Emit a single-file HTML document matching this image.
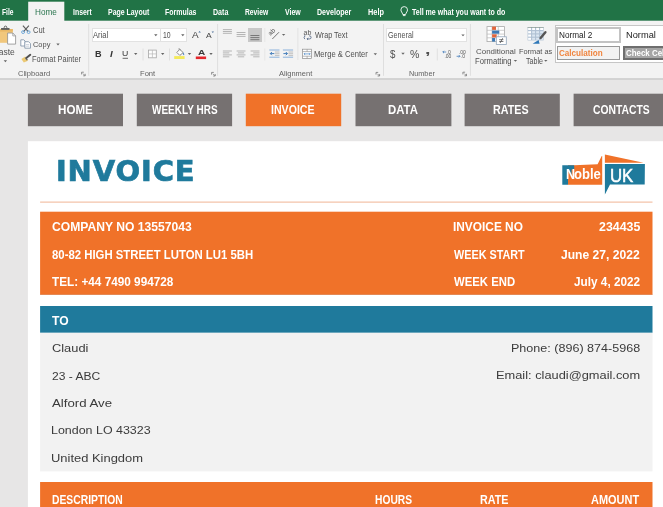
<!DOCTYPE html>
<html lang="en">
<head>
<meta charset="utf-8">
<title>Invoice</title>
<style>
html,body{margin:0;padding:0;}
body{width:663px;height:507px;overflow:hidden;position:relative;background:#e7e6e6;font-family:"Liberation Sans",sans-serif;}
.a{position:absolute;}
.t{position:absolute;white-space:nowrap;line-height:20px;height:20px;transform-origin:0 50%;}
.box{position:absolute;background:#fff;border:1px solid #e2e2e2;box-sizing:border-box;}
#txt{position:absolute;left:0;top:0;width:663px;height:507px;will-change:transform;filter:blur(0.4px);}
#title{left:55.9px;top:157px;font:bold 29px/1 "DejaVu Sans",sans-serif;color:#1f7a9c;-webkit-text-stroke:0.7px #1f7a9c;letter-spacing:0.86px;white-space:nowrap;}
</style>
</head>
<body>
<svg class="a" style="left:0;top:0" width="663" height="82" viewBox="0 0 663 82">
<rect x="0" y="0" width="663" height="79" fill="#f3f3f3"/>
<rect x="0" y="0" width="663" height="20.7" fill="#217346"/>
<rect x="28.2" y="1.7" width="36.1" height="21" fill="#f3f3f3"/>
<rect x="0" y="78.4" width="663" height="1.1" fill="#c0c0c0"/>
</svg>
<!-- combo boxes -->
<div class="box" style="left:91.8px;top:28.2px;width:69px;height:14px"></div>
<div class="box" style="left:159.8px;top:28.2px;width:27.4px;height:14px"></div>
<div class="box" style="left:385.8px;top:28.2px;width:81px;height:14px"></div>
<!-- selected align button -->
<div class="a" style="left:248.3px;top:27.7px;width:13.8px;height:14.2px;background:#c8c8c8"></div>
<!-- styles gallery -->
<div class="box" style="left:555.2px;top:25.2px;width:120px;height:37.6px;border-color:#c6c6c6"></div>
<div class="box" style="left:556px;top:27px;width:65px;height:16px;border:2px solid #c3c3c3"></div>
<div class="box" style="left:557px;top:46px;width:63px;height:14px;background:#f2f2f2;border-color:#989898"></div>
<div class="box" style="left:623px;top:46px;width:50px;height:14px;background:#a5a5a5;border:2px solid #6e6e6e"></div>
<svg class="a" style="left:0;top:0;will-change:transform;filter:blur(0.3px)" width="663" height="80" viewBox="0 0 663 80" fill="none">
<path d="M88.7,24 V75.8" stroke="#dedede" stroke-width="1"/>
<path d="M217.6,24 V75.8" stroke="#dedede" stroke-width="1"/>
<path d="M383.5,24 V75.8" stroke="#dedede" stroke-width="1"/>
<path d="M470.4,24 V75.8" stroke="#dedede" stroke-width="1"/>
<path d="M297.9,28 V60" stroke="#e3e3e3" stroke-width="1"/>
<path d="M143,48.5 V60.5" stroke="#e0e0e0" stroke-width="1"/>
<path d="M169.5,48.5 V60.5" stroke="#e0e0e0" stroke-width="1"/>
<path d="M437.3,48.5 V60.5" stroke="#e0e0e0" stroke-width="1"/>
<path d="M264.8,28 V42" stroke="#e6e6e6" stroke-width="1"/>
<path d="M264.8,48.5 V60.5" stroke="#e6e6e6" stroke-width="1"/>
<path d="M404.2,6.6 a3.3,3.3 0 0 1 3.3,3.3 c0,1.6 -1.3,2.4 -1.9,4.6 h-2.8 c-0.6,-2.2 -1.9,-3 -1.9,-4.6 a3.3,3.3 0 0 1 3.3,-3.3 z" stroke="#e8f2ec" stroke-width="1" fill="none"/>
<path d="M402.9,15.6 h2.6" stroke="#e8f2ec" stroke-width="1"/>
<rect x="-2" y="29" width="14.8" height="13.8" fill="#f1c77c"/>
<rect x="-2" y="29" width="14.8" height="2.6" fill="#e9b866"/>
<rect x="1.1" y="28" width="8.4" height="1.9" fill="#5f5f5f"/>
<path d="M4.2,28 v-0.6 a1.3,1.3 0 0 1 2.6,0 v0.6" stroke="#5f5f5f" stroke-width="1" fill="none"/>
<path d="M7.6,33 h5.2 l2.8,2.9 v8.2 h-8 z" fill="#fff" stroke="#8e8e8e" stroke-width="0.8"/>
<path d="M12.8,33 v2.9 h2.8" fill="none" stroke="#8e8e8e" stroke-width="0.7"/>
<polygon points="3.70,60.25 7.10,60.25 5.40,62.15" fill="#666"/>
<path d="M22.9,25.6 L28.2,31.6 M28.9,25.6 L23.6,31.6" stroke="#5a5a5a" stroke-width="1.1" fill="none"/>
<ellipse cx="23.1" cy="32.1" rx="1.5" ry="1.4" stroke="#5f9fd6" stroke-width="0.85" fill="none"/>
<ellipse cx="28.6" cy="32.1" rx="1.5" ry="1.4" stroke="#5f9fd6" stroke-width="0.85" fill="none"/>
<path d="M20.8,39.8 h3 l1.4,1.4 v4.8 h-4.4 z" fill="#fff" stroke="#7b8ea3" stroke-width="0.8"/>
<path d="M24.8,41.7 h3.8 l1.9,1.9 v4.6 h-5.7 z" fill="#fff" stroke="#7b8ea3" stroke-width="0.8"/>
<path d="M26,44.6 h3.2 M26,46.2 h3.2" stroke="#a9b6c4" stroke-width="0.6"/>
<polygon points="56.30,43.55 59.70,43.55 58.00,45.45" fill="#666"/>
<polygon points="21.4,58.9 25.2,56.4 28,60.7 23.8,62.6" fill="#ecc973"/>
<path d="M25.4,57.6 L27.3,60.2" stroke="#6a6a6a" stroke-width="1.4"/>
<path d="M26.6,57.8 L30.3,54.8" stroke="#4f4f4f" stroke-width="1.9" stroke-linecap="round"/>
<polygon points="154.10,34.35 157.50,34.35 155.80,36.25" fill="#666"/>
<polygon points="181.10,34.35 184.50,34.35 182.80,36.25" fill="#666"/>
<polygon points="134.00,53.05 137.40,53.05 135.70,54.95" fill="#666"/>
<polygon points="161.00,53.05 164.40,53.05 162.70,54.95" fill="#666"/>
<polygon points="187.80,53.05 191.20,53.05 189.50,54.95" fill="#666"/>
<polygon points="209.30,53.05 212.70,53.05 211.00,54.95" fill="#666"/>
<polygon points="281.90,33.95 285.30,33.95 283.60,35.85" fill="#666"/>
<polygon points="373.60,53.35 377.00,53.35 375.30,55.25" fill="#666"/>
<polygon points="461.30,34.45 464.70,34.45 463.00,36.35" fill="#666"/>
<polygon points="401.30,52.85 404.70,52.85 403.00,54.75" fill="#666"/>
<polygon points="513.70,59.95 517.10,59.95 515.40,61.85" fill="#666"/>
<polygon points="544.10,59.95 547.50,59.95 545.80,61.85" fill="#666"/>
<polygon points="198.3,32.6 199.6,30.9 200.9,32.6" fill="#4c6f99"/>
<polygon points="211.6,31.4 214,31.4 212.8,33" fill="#4c6f99"/>
<path d="M122.6,58.3 H128" stroke="#444" stroke-width="0.8"/>
<rect x="148.5" y="50.1" width="7.8" height="7.7" fill="#fdfdfd" stroke="#a6a6a6" stroke-width="0.8"/>
<path d="M152.4,50.1 v7.7 M148.5,53.9 h7.8" stroke="#b8b8b8" stroke-width="0.7"/>
<path d="M176.8,52.4 L179.8,49.4 L183.2,52.6 L179.8,55.4 Z" fill="#fff" stroke="#707070" stroke-width="0.8"/>
<path d="M178.3,49 q1.6,-1 2,1.2" fill="none" stroke="#7a7a7a" stroke-width="0.7"/>
<path d="M183.2,52.2 q1.6,1.8 0.9,3 q-1.6,0 -0.9,-3z" fill="#4f86c0"/>
<rect x="174.2" y="56.1" width="10.4" height="2.9" fill="#f4ea5a"/>
<rect x="195.8" y="56.5" width="10.3" height="2.6" fill="#e3262c"/>
<path d="M222.9,29.6 H231.9" stroke="#a4a4a4" stroke-width="0.8"/>
<path d="M222.9,31.5 H231.9" stroke="#a4a4a4" stroke-width="0.8"/>
<path d="M222.9,33.3 H231.9" stroke="#a4a4a4" stroke-width="0.8"/>
<path d="M236.6,32.5 H245.5" stroke="#a4a4a4" stroke-width="0.8"/>
<path d="M236.6,34.5 H245.5" stroke="#a4a4a4" stroke-width="0.8"/>
<path d="M236.6,36.4 H245.5" stroke="#a4a4a4" stroke-width="0.8"/>
<path d="M250.4,35.5 H259.4" stroke="#6e6e6e" stroke-width="0.9"/>
<path d="M250.4,37.6 H259.4" stroke="#6e6e6e" stroke-width="0.9"/>
<path d="M250.4,39.7 H259.4" stroke="#6e6e6e" stroke-width="0.9"/>
<path d="M222.9,51 H231.9" stroke="#a4a4a4" stroke-width="0.8"/>
<path d="M236.6,51 H245.5" stroke="#a4a4a4" stroke-width="0.8"/>
<path d="M250.6,51 H259.5" stroke="#a4a4a4" stroke-width="0.8"/>
<path d="M222.9,52.9 H229.3" stroke="#a4a4a4" stroke-width="0.8"/>
<path d="M237.9,52.9 H244.2" stroke="#a4a4a4" stroke-width="0.8"/>
<path d="M253.2,52.9 H259.5" stroke="#a4a4a4" stroke-width="0.8"/>
<path d="M222.9,54.9 H231.9" stroke="#a4a4a4" stroke-width="0.8"/>
<path d="M236.6,54.9 H245.5" stroke="#a4a4a4" stroke-width="0.8"/>
<path d="M250.6,54.9 H259.5" stroke="#a4a4a4" stroke-width="0.8"/>
<path d="M222.9,56.8 H229.3" stroke="#a4a4a4" stroke-width="0.8"/>
<path d="M237.9,56.8 H244.2" stroke="#a4a4a4" stroke-width="0.8"/>
<path d="M253.2,56.8 H259.5" stroke="#a4a4a4" stroke-width="0.8"/>
<text x="0" y="0" transform="translate(270.6,36) rotate(-45)" font-family="Liberation Sans, sans-serif" font-size="6.6" fill="#555">ab</text>
<path d="M272.3,39 L279,32.2" stroke="#666" stroke-width="0.9"/>
<path d="M269.3,50 H279.5" stroke="#6f9fd3" stroke-width="0.8"/>
<path d="M269.3,57.2 H279.5" stroke="#6f9fd3" stroke-width="0.8"/>
<path d="M274.90000000000003,52 H279.5" stroke="#aaaaaa" stroke-width="0.7"/>
<path d="M274.90000000000003,53.7 H279.5" stroke="#aaaaaa" stroke-width="0.7"/>
<path d="M274.90000000000003,55.4 H279.5" stroke="#aaaaaa" stroke-width="0.7"/>
<path d="M282.9,50 H293.09999999999997" stroke="#6f9fd3" stroke-width="0.8"/>
<path d="M282.9,57.2 H293.09999999999997" stroke="#6f9fd3" stroke-width="0.8"/>
<path d="M288.5,52 H293.09999999999997" stroke="#aaaaaa" stroke-width="0.7"/>
<path d="M288.5,53.7 H293.09999999999997" stroke="#aaaaaa" stroke-width="0.7"/>
<path d="M288.5,55.4 H293.09999999999997" stroke="#aaaaaa" stroke-width="0.7"/>
<path d="M274.3,53.6 h-4 m1.6,-1.6 l-1.6,1.6 l1.6,1.6" stroke="#2f6fb3" stroke-width="0.9" fill="none"/>
<path d="M283.4,53.6 h4 m-1.6,-1.6 l1.6,1.6 l-1.6,1.6" stroke="#2f6fb3" stroke-width="0.9" fill="none"/>
<text x="303.6" y="34.6" font-family="Liberation Sans, sans-serif" font-size="7" fill="#555">ab</text>
<path d="M304.2,35.9 h1.2 M309,35.9 h0.6 a1.5,1.5 0 0 1 0,3 h-2.6 m1.1,-1.1 l-1.1,1.1 l1.1,1.1" stroke="#4b5f80" stroke-width="0.8" fill="none"/><path d="M304.6,36.2 q-1.2,1.4 0.2,2.9" stroke="#4b5f80" stroke-width="0.8" fill="none"/>

<rect x="302.6" y="49.2" width="9" height="9.4" fill="#fff" stroke="#8e8e8e" stroke-width="0.7"/>
<path d="M302.6,51.6 h9 M302.6,56.2 h9 M307.1,49.2 v2.4 M307.1,56.2 v2.4" stroke="#9a9a9a" stroke-width="0.7"/>
<path d="M304,53.9 h6.2 m-5.2,-1 l-1,1 l1,1 m4.2,-2 l1,1 l-1,1" stroke="#4a86c5" stroke-width="0.7" fill="none"/>
<text x="446.6" y="53.7" font-family="Liberation Sans, sans-serif" font-size="5" fill="#555">.0</text><text x="444.4" y="57.9" font-family="Liberation Sans, sans-serif" font-size="5" fill="#555">.00</text>
<path d="M446.2,52 h-3.4 m1.2,-1.2 l-1.2,1.2 l1.2,1.2" stroke="#2f6fb3" stroke-width="0.7" fill="none"/>
<text x="458.8" y="53.7" font-family="Liberation Sans, sans-serif" font-size="5" fill="#555">.00</text><text x="460.9" y="57.9" font-family="Liberation Sans, sans-serif" font-size="5" fill="#555">.0</text>
<path d="M456.6,56.3 h3.4 m-1.2,-1.2 l1.2,1.2 l-1.2,1.2" stroke="#2f6fb3" stroke-width="0.7" fill="none"/>
<path d="M81.6,72.60000000000001 H81.69999999999999 M81.6,72.2 h2.2 M81.6,72.2 v2.2" stroke="#777" stroke-width="0.8" fill="none"/><path d="M83.0,73.60000000000001 L85.0,75.60000000000001 M85.19999999999999,73.8 V75.8 H83.19999999999999" stroke="#777" stroke-width="0.8" fill="none"/>
<path d="M211.6,72.80000000000001 H211.7 M211.6,72.4 h2.2 M211.6,72.4 v2.2" stroke="#777" stroke-width="0.8" fill="none"/><path d="M213.0,73.80000000000001 L215.0,75.80000000000001 M215.2,74.0 V76.0 H213.2" stroke="#777" stroke-width="0.8" fill="none"/>
<path d="M376,72.80000000000001 H376.1 M376,72.4 h2.2 M376,72.4 v2.2" stroke="#777" stroke-width="0.8" fill="none"/><path d="M377.4,73.80000000000001 L379.4,75.80000000000001 M379.6,74.0 V76.0 H377.6" stroke="#777" stroke-width="0.8" fill="none"/>
<path d="M462.9,72.60000000000001 H463.0 M462.9,72.2 h2.2 M462.9,72.2 v2.2" stroke="#777" stroke-width="0.8" fill="none"/><path d="M464.29999999999995,73.60000000000001 L466.29999999999995,75.60000000000001 M466.5,73.8 V75.8 H464.5" stroke="#777" stroke-width="0.8" fill="none"/>
<rect x="487" y="26.6" width="17.4" height="15" fill="#fff" stroke="#a9a9a9" stroke-width="0.8"/>
<path d="M487,30.3 h17.4 M487,34.1 h17.4 M487,37.8 h17.4 M492.1,26.6 v15 M498.3,26.6 v15" stroke="#b9b9b9" stroke-width="0.7"/>
<rect x="492.1" y="26.6" width="3.9" height="3.3" fill="#e2653c"/>
<rect x="492.1" y="30.6" width="7.2" height="3.1" fill="#3d79b4"/>
<rect x="492.1" y="34.3" width="4.6" height="3.2" fill="#e2653c"/>
<rect x="492.1" y="38" width="3" height="3.6" fill="#3d79b4"/>
<rect x="496.3" y="36.8" width="10" height="7.6" fill="#fff" stroke="#8fa3b8" stroke-width="0.8"/>
<path d="M499.2,39.7 h4.2 M499.2,41.5 h4.2 M502.7,38.2 l-2.6,4.8" stroke="#444" stroke-width="0.7"/>
<rect x="527.6" y="27.3" width="16.0" height="13.1" fill="#afc0d3"/>
<rect x="527.6" y="27.0" width="16.0" height="0.9" fill="#8f9d98"/>
<rect x="528.15" y="27.85" width="2.90" height="2.20" fill="#ffffff"/>
<rect x="532.15" y="27.85" width="2.90" height="2.20" fill="#ffffff"/>
<rect x="536.15" y="27.85" width="2.90" height="2.20" fill="#ffffff"/>
<rect x="540.15" y="27.85" width="2.90" height="2.20" fill="#ffffff"/>
<rect x="528.15" y="31.15" width="2.90" height="2.20" fill="#ffffff"/>
<rect x="532.15" y="31.15" width="2.90" height="2.20" fill="#dbe6f1"/>
<rect x="536.15" y="31.15" width="2.90" height="2.20" fill="#dbe6f1"/>
<rect x="540.15" y="31.15" width="2.90" height="2.20" fill="#dbe6f1"/>
<rect x="528.15" y="34.45" width="2.90" height="2.20" fill="#ffffff"/>
<rect x="532.15" y="34.45" width="2.90" height="2.20" fill="#dbe6f1"/>
<rect x="536.15" y="34.45" width="2.90" height="2.20" fill="#dbe6f1"/>
<rect x="540.15" y="34.45" width="2.90" height="2.20" fill="#dbe6f1"/>
<rect x="528.15" y="37.75" width="2.90" height="2.10" fill="#ffffff"/>
<rect x="532.15" y="37.75" width="2.90" height="2.10" fill="#dbe6f1"/>
<rect x="536.15" y="37.75" width="2.90" height="2.10" fill="#dbe6f1"/>
<rect x="540.15" y="37.75" width="2.90" height="2.10" fill="#dbe6f1"/>
<path d="M545.4,32.2 L540.6,38" stroke="#555" stroke-width="2.4" stroke-linecap="round"/>
<polygon points="532.6,43.7 538.6,39.9 539.6,43.7" fill="#2f78b8"/>
</svg>
<svg class="a" style="left:0;top:80px" width="663" height="427" viewBox="0 80 663 427">
<rect x="27.9" y="93.7" width="95.1" height="32.5" fill="#767171"/>
<rect x="136.8" y="93.7" width="95.3" height="32.5" fill="#767171"/>
<rect x="245.8" y="93.7" width="95.4" height="32.5" fill="#f07229"/>
<rect x="355.5" y="93.7" width="95.9" height="32.5" fill="#767171"/>
<rect x="464.6" y="93.7" width="95.2" height="32.5" fill="#767171"/>
<rect x="573.6" y="93.7" width="95" height="32.5" fill="#767171"/>
<rect x="27.9" y="141.2" width="640" height="380" fill="#fff"/>
<rect x="40.1" y="201.6" width="612.4" height="1" fill="#f0b595"/>
<rect x="40.1" y="211.7" width="612.4" height="82.8" fill="#f07229"/>
<rect x="40.1" y="294" width="612.4" height="0.6" fill="#d8682a"/>
<rect x="40.1" y="306" width="612.4" height="26.8" fill="#1f7a9c"/>
<rect x="40.1" y="332.8" width="612.4" height="138.6" fill="#f2f2f2"/>
<rect x="40.1" y="482" width="612.4" height="30" fill="#f07229"/>
</svg>
<svg class="a" style="left:555px;top:150px" width="100" height="50" viewBox="555 150 100 50">
<polygon points="568,165.3 574,165.3 597.6,164.3 601.7,156 602.2,156 602.2,184.7 568,184.7" fill="#f07229"/>
<polygon points="562.3,165.3 574.2,165.3 574.2,169.6 571.6,169.6 571.6,177.5 568,170.5 568,184.7 562.3,184.7" fill="#1f7a9c"/>
<polygon points="604.9,154.4 643.6,162.8 604.9,162.8" fill="#f07229"/>
<polygon points="604.9,163.9 644.9,163.9 644.7,184.4 610,184.4 604.9,194.6" fill="#1f7a9c"/>
</svg>
<div id="txt">
<div class="a" id="title">INVOICE</div>
<div class="t" style="left:2.39px;top:2px;font-size:8.6px;color:#fff;transform:scaleX(0.7757);font-weight:bold;">File</div>
<div class="t" style="left:72.77px;top:2px;font-size:8.6px;color:#fff;transform:scaleX(0.8046);font-weight:bold;">Insert</div>
<div class="t" style="left:107.67px;top:2px;font-size:8.6px;color:#fff;transform:scaleX(0.8077);font-weight:bold;">Page Layout</div>
<div class="t" style="left:165.37px;top:2px;font-size:8.6px;color:#fff;transform:scaleX(0.8120);font-weight:bold;">Formulas</div>
<div class="t" style="left:212.96px;top:2px;font-size:8.6px;color:#fff;transform:scaleX(0.8239);font-weight:bold;">Data</div>
<div class="t" style="left:244.99px;top:2px;font-size:8.6px;color:#fff;transform:scaleX(0.7808);font-weight:bold;">Review</div>
<div class="t" style="left:284.55px;top:2px;font-size:8.6px;color:#fff;transform:scaleX(0.8123);font-weight:bold;">View</div>
<div class="t" style="left:317.06px;top:2px;font-size:8.6px;color:#fff;transform:scaleX(0.8241);font-weight:bold;">Developer</div>
<div class="t" style="left:367.54px;top:2px;font-size:8.6px;color:#fff;transform:scaleX(0.8557);font-weight:bold;">Help</div>
<div class="t" style="left:411.79px;top:2px;font-size:8.6px;color:#fff;transform:scaleX(0.8195);font-weight:bold;">Tell me what you want to do</div>
<div class="t" style="left:35.06px;top:2px;font-size:8.6px;color:#2b7650;transform:scaleX(0.9529);">Home</div>
<div class="t" style="left:-7.17px;top:43px;font-size:8.2px;color:#505050;transform:scaleX(1.0371);">Paste</div>
<div class="t" style="left:32.60px;top:21px;font-size:8.2px;color:#505050;transform:scaleX(0.9194);">Cut</div>
<div class="t" style="left:32.63px;top:35px;font-size:8.1px;color:#505050;transform:scaleX(0.9181);">Copy</div>
<div class="t" style="left:32.42px;top:50px;font-size:8.2px;color:#505050;transform:scaleX(0.9046);">Format Painter</div>
<div class="t" style="left:18.33px;top:64px;font-size:8.0px;color:#626262;transform:scaleX(0.9400);">Clipboard</div>
<div class="t" style="left:140.41px;top:64px;font-size:8.0px;color:#626262;transform:scaleX(0.9505);">Font</div>
<div class="t" style="left:278.87px;top:64px;font-size:8.0px;color:#626262;transform:scaleX(0.9339);">Alignment</div>
<div class="t" style="left:409.03px;top:64px;font-size:8.0px;color:#626262;transform:scaleX(0.9097);">Number</div>
<div class="t" style="left:93.35px;top:26px;font-size:8.2px;color:#505050;transform:scaleX(0.9257);">Arial</div>
<div class="t" style="left:162.88px;top:26px;font-size:8.2px;color:#505050;transform:scaleX(0.8360);">10</div>
<div class="t" style="left:387.93px;top:26px;font-size:8.2px;color:#505050;transform:scaleX(0.8747);">General</div>
<div class="t" style="left:314.74px;top:26px;font-size:8.2px;color:#505050;transform:scaleX(0.8865);">Wrap Text</div>
<div class="t" style="left:314.40px;top:45px;font-size:8.2px;color:#505050;transform:scaleX(0.9319);">Merge &amp; Center</div>
<div class="t" style="left:476.01px;top:42px;font-size:8.1px;color:#505050;transform:scaleX(0.9809);">Conditional</div>
<div class="t" style="left:474.60px;top:52px;font-size:8.2px;color:#505050;transform:scaleX(0.9360);">Formatting</div>
<div class="t" style="left:519.43px;top:42px;font-size:8.1px;color:#505050;transform:scaleX(0.9105);">Format as</div>
<div class="t" style="left:525.56px;top:52px;font-size:8.2px;color:#505050;transform:scaleX(0.8629);">Table</div>
<div class="t" style="left:559.06px;top:25px;font-size:9.0px;color:#222;transform:scaleX(0.9113);">Normal 2</div>
<div class="t" style="left:625.57px;top:25px;font-size:9.0px;color:#222;transform:scaleX(1.0285);">Normal</div>
<div class="t" style="left:559.33px;top:43px;font-size:8.6px;color:#f0843e;transform:scaleX(0.9426);font-weight:bold;">Calculation</div>
<div class="t" style="left:625.95px;top:43px;font-size:8.6px;color:#fff;transform:scaleX(0.9205);font-weight:bold;">Check Cell</div>
<div class="t" style="left:94.50px;top:44px;font-size:9.0px;color:#333;transform:scaleX(1.0161);font-weight:bold;font-family:"Liberation Serif",serif;">B</div>
<div class="t" style="left:109.83px;top:44px;font-size:8.6px;color:#333;transform:scaleX(1.1301);font-weight:bold;font-style:italic;font-family:"Liberation Serif",serif;">I</div>
<div class="t" style="left:122.15px;top:44px;font-size:8.1px;color:#333;transform:scaleX(1.0752);">U</div>
<div class="t" style="left:390.19px;top:45px;font-size:10.4px;color:#505050;transform:scaleX(0.9358);">$</div>
<div class="t" style="left:409.53px;top:45px;font-size:10.4px;color:#505050;transform:scaleX(1.0159);">%</div>
<div class="t" style="left:424.67px;top:40px;font-size:12.0px;color:#505050;transform:scaleX(1.6293);font-weight:bold;">,</div>
<div class="t" style="left:191.60px;top:25px;font-size:9.8px;color:#444;transform:scaleX(1.0147);">A</div>
<div class="t" style="left:205.77px;top:26px;font-size:8.1px;color:#444;transform:scaleX(1.0492);">A</div>
<div class="t" style="left:197.54px;top:43px;font-size:8.1px;color:#3a3a3a;transform:scaleX(1.2420);font-weight:bold;">A</div>
<div class="t" style="left:57.95px;top:100px;font-size:12.2px;color:#fff;transform:scaleX(0.9532);font-weight:bold;">HOME</div>
<div class="t" style="left:152.14px;top:100px;font-size:12.2px;color:#fff;transform:scaleX(0.8203);font-weight:bold;">WEEKLY HRS</div>
<div class="t" style="left:271.31px;top:100px;font-size:12.2px;color:#fff;transform:scaleX(0.8695);font-weight:bold;">INVOICE</div>
<div class="t" style="left:387.96px;top:100px;font-size:12.2px;color:#fff;transform:scaleX(0.9350);font-weight:bold;">DATA</div>
<div class="t" style="left:493.31px;top:100px;font-size:12.2px;color:#fff;transform:scaleX(0.8799);font-weight:bold;">RATES</div>
<div class="t" style="left:593.18px;top:100px;font-size:12.2px;color:#fff;transform:scaleX(0.8479);font-weight:bold;">CONTACTS</div>
<div class="t" style="left:565.68px;top:164px;font-size:14.0px;color:#fff;transform:scaleX(0.8948);font-weight:bold;">N</div>
<div class="t" style="left:574.06px;top:164px;font-size:14.3px;color:#fff;transform:scaleX(0.9129);font-weight:bold;">oble</div>
<div class="t" style="left:610.04px;top:166px;font-size:18.6px;color:#fff;transform:scaleX(0.9029);-webkit-text-stroke:0.5px #fff;">UK</div>
<div class="t" style="left:51.80px;top:217px;font-size:12.2px;color:#fff;transform:scaleX(0.9956);font-weight:bold;">COMPANY NO 13557043</div>
<div class="t" style="left:51.93px;top:245px;font-size:12.2px;color:#fff;transform:scaleX(0.9322);font-weight:bold;">80-82 HIGH STREET LUTON LU1 5BH</div>
<div class="t" style="left:52.22px;top:272px;font-size:12.2px;color:#fff;transform:scaleX(0.9658);font-weight:bold;">TEL: +44 7490 994728</div>
<div class="t" style="left:453.33px;top:217px;font-size:12.2px;color:#fff;transform:scaleX(0.9736);font-weight:bold;">INVOICE NO</div>
<div class="t" style="left:454.03px;top:245px;font-size:12.2px;color:#fff;transform:scaleX(0.8879);font-weight:bold;">WEEK START</div>
<div class="t" style="left:454.03px;top:272px;font-size:12.2px;color:#fff;transform:scaleX(0.9304);font-weight:bold;">WEEK END</div>
<div class="t" style="left:598.71px;top:217px;font-size:12.2px;color:#fff;transform:scaleX(1.0150);font-weight:bold;">234435</div>
<div class="t" style="left:561.35px;top:245px;font-size:12.2px;color:#fff;transform:scaleX(0.9929);font-weight:bold;">June 27, 2022</div>
<div class="t" style="left:574.07px;top:272px;font-size:12.2px;color:#fff;transform:scaleX(0.9665);font-weight:bold;">July 4, 2022</div>
<div class="t" style="left:52.21px;top:311px;font-size:12.2px;color:#fff;transform:scaleX(0.9943);font-weight:bold;">TO</div>
<div class="t" style="left:51.62px;top:338px;font-size:11.7px;color:#3b3b3b;transform:scaleX(1.0978);">Claudi</div>
<div class="t" style="left:51.70px;top:366px;font-size:11.7px;color:#3b3b3b;transform:scaleX(1.0318);">23 - ABC</div>
<div class="t" style="left:52.10px;top:393px;font-size:11.7px;color:#3b3b3b;transform:scaleX(1.1323);">Alford Ave</div>
<div class="t" style="left:51.30px;top:420px;font-size:11.7px;color:#3b3b3b;transform:scaleX(1.0644);">London LO 43323</div>
<div class="t" style="left:51.30px;top:448px;font-size:11.7px;color:#3b3b3b;transform:scaleX(1.1064);">United Kingdom</div>
<div class="t" style="left:511.00px;top:338px;font-size:11.7px;color:#3b3b3b;transform:scaleX(1.0742);">Phone: (896) 874-5968</div>
<div class="t" style="left:496.10px;top:365px;font-size:11.7px;color:#3b3b3b;transform:scaleX(1.0970);">Email: claudi@gmail.com</div>
<div class="t" style="left:51.64px;top:490px;font-size:12.2px;color:#fff;transform:scaleX(0.8482);font-weight:bold;">DESCRIPTION</div>
<div class="t" style="left:374.84px;top:490px;font-size:12.2px;color:#fff;transform:scaleX(0.8416);font-weight:bold;">HOURS</div>
<div class="t" style="left:479.51px;top:490px;font-size:12.2px;color:#fff;transform:scaleX(0.8834);font-weight:bold;">RATE</div>
<div class="t" style="left:591.33px;top:490px;font-size:12.2px;color:#fff;transform:scaleX(0.8995);font-weight:bold;">AMOUNT</div>
</div>
</body>
</html>
